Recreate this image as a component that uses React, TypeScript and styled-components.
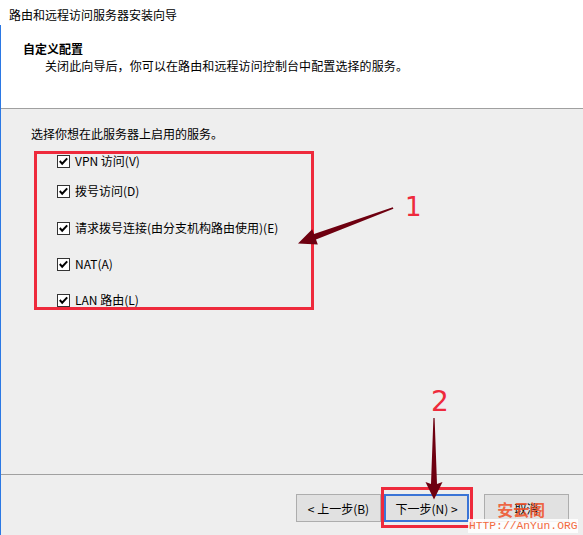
import styled, { createGlobalStyle } from 'styled-components';

const GlobalStyle = createGlobalStyle`
  html, body {
    margin: 0;
    padding: 0;
    background: #eeeeee;
  }
  body {
    font-family: 'Noto Sans CJK SC', 'Noto Sans', sans-serif;
    font-size: 12px;
    color: #000;
  }
`;

const services = [
  { label: 'VPN 访问(V)', top: 0 },
  { label: '拨号访问(D)', top: 16 },
  { label: '请求拨号连接(由分支机构路由使用)(E)', top: 23 },
  { label: 'NAT(A)', top: 22 },
  { label: 'LAN 路由(L)', top: 22 },
];

const App = () => {
  return (
    <>
      <GlobalStyle />
      <Window>
        <TitleBar>路由和远程访问服务器安装向导</TitleBar>
        <Frame>
          <Header>
            <HeaderTitle>自定义配置</HeaderTitle>
            <HeaderText>关闭此向导后，你可以在路由和远程访问控制台中配置选择的服务。</HeaderText>
          </Header>
          <Body>
            <Prompt>选择你想在此服务器上启用的服务。</Prompt>
            <ServiceList>
              {services.map((s) => (
                <ServiceRow key={s.label} $top={s.top}>
                  <CheckBox>
                    <svg width='11' height='11' viewBox='0 0 11 11'>
                      <path d='M1.8 5 L4.2 7.8 L9.2 2.4' stroke='#000' strokeWidth='2' fill='none' />
                    </svg>
                  </CheckBox>
                  <span>{s.label}</span>
                </ServiceRow>
              ))}
            </ServiceList>
          </Body>
          <Footer>
            <Button>&lt; 上一步(B)</Button>
            <Highlight>
              <Button $primary>下一步(N) &gt;</Button>
            </Highlight>
            <Button $gap={11}>取消</Button>
          </Footer>
        </Frame>

        <Overlay width='583' height='535' viewBox='0 0 583 535'>
          <polygon
            points='392.8,207.3 314,233.9 312.2,229.2 298,243.5 317.8,244.4 316,239.5 393.4,208.7'
            fill='#6e0010'
          />
          <polygon points='433.4,418 434.6,418 437,484 442.5,482 434,499.5 425.5,482 431,484' fill='#6e0010' />
        </Overlay>
        <Mark $x={405} $y={193} $size={26}>1</Mark>
        <Mark $x={431} $y={386} $size={28}>2</Mark>
        <Watermark>
          <WaterTitle>安云阁</WaterTitle>
          <WaterUrl>HTTP://AnYun.ORG</WaterUrl>
        </Watermark>
      </Window>
    </>
  );
};

export default App;

const Window = styled.div`
  position: relative;
  width: 583px;
  height: 535px;
  display: flex;
  flex-direction: column;
  overflow: hidden;
  background: #eeeeee;
`;

const TitleBar = styled.div`
  height: 25px;
  box-sizing: border-box;
  padding: 7px 0 0 9px;
  line-height: 16px;
  background: #fff;
`;

const Frame = styled.div`
  flex: 1;
  display: flex;
  flex-direction: column;
  border-left: 1px solid #2b78e4;
`;

const Header = styled.div`
  height: 84px;
  box-sizing: border-box;
  background: #fff;
  border-bottom: 1px solid #a0a0a0;
  padding: 16px 0 0 22px;
`;

const HeaderTitle = styled.div`
  font-weight: bold;
  line-height: 16px;
`;

const HeaderText = styled.div`
  margin-top: 1px;
  padding-left: 22px;
  line-height: 16px;
  letter-spacing: 0.1px;
`;

const Body = styled.div`
  flex: 1;
  padding: 17px 0 0 30px;
`;

const Prompt = styled.div`
  line-height: 16px;
`;

const ServiceList = styled.div`
  width: 254px;
  height: 153px;
  margin: 9px 0 0 3px;
  border: 3px solid #ee2a3c;
  padding-left: 20px;
`;

const ServiceRow = styled.div<{ $top: number }>`
  display: flex;
  align-items: center;
  gap: 5px;
  height: 14px;
  line-height: 14px;
  margin-top: ${(p) => p.$top}px;
  white-space: nowrap;
`;

const CheckBox = styled.span`
  width: 13px;
  height: 13px;
  flex-shrink: 0;
  box-sizing: border-box;
  border: 1px solid #333;
  background: #fff;
  display: flex;
  align-items: center;
  justify-content: center;
`;

const Footer = styled.div`
  height: 61px;
  box-sizing: border-box;
  border-top: 1px solid #a0a0a0;
  display: flex;
  justify-content: flex-end;
  align-items: flex-start;
  padding: 19px 14px 0 0;
`;

const Highlight = styled.div`
  margin-top: -7px;
  border: 3px solid #ee2a3c;
  padding: 4px 1px 3px 0;
`;

const Button = styled.button<{ $primary?: boolean; $gap?: number }>`
  width: 85px;
  height: 28px;
  margin-left: ${(p) => p.$gap ?? 0}px;
  box-sizing: border-box;
  background: #e1e1e1;
  border: ${(p) => (p.$primary ? '2px solid #3a74d6' : '1px solid #adadad')};
  font-family: 'Noto Sans CJK SC', 'Noto Sans', sans-serif;
  font-size: 12px;
  color: #000;
  padding: 0;
`;

const Overlay = styled.svg`
  position: absolute;
  left: 0;
  top: 0;
  pointer-events: none;
`;

const Mark = styled.div<{ $x: number; $y: number; $size: number }>`
  position: absolute;
  left: ${(p) => p.$x}px;
  top: ${(p) => p.$y}px;
  font-family: 'DejaVu Sans', sans-serif;
  font-size: ${(p) => p.$size}px;
  line-height: 1.15;
  color: #ee2a3c;
`;

const Watermark = styled.div`
  position: absolute;
  left: 468px;
  top: 500px;
  display: flex;
  flex-direction: column;
  align-items: center;
`;

const WaterTitle = styled.div`
  font-weight: bold;
  font-size: 16px;
  line-height: 19px;
  color: rgba(240, 80, 40, 0.85);
  margin-right: 4px;
`;

const WaterUrl = styled.div`
  background: rgba(255, 255, 255, 0.85);
  color: #f26a3d;
  font-family: 'Liberation Mono', monospace;
  font-size: 11.3px;
  line-height: 14px;
  padding: 0 1px;
`;
